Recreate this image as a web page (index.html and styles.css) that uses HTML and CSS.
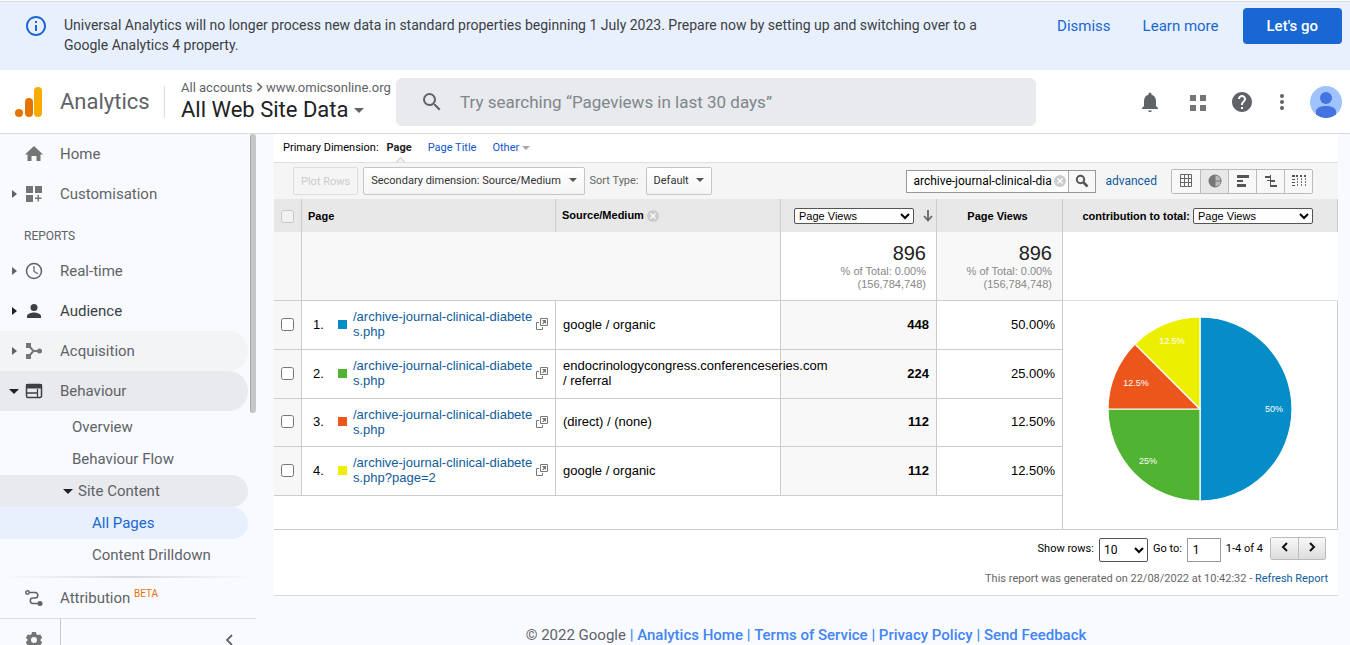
FILE: index.html
```html
<!DOCTYPE html>
<html lang="en-GB">
<head>
    <meta charset="UTF-8">
    <title>Analytics</title>
    <link rel="stylesheet" href="styles.css">
</head>
<body>
<div class="banner">
    <svg class="banner-icon" width="24" height="24" viewBox="0 0 24 24"><path fill="#1967d2" d="M11 7h2v2h-2zm0 4h2v6h-2zm1-9C6.480 2 2 6.480 2 12s4.480 10 10 10 10-4.480 10-10S17.520 2 12 2zm0 18c-4.410 0-8-3.590-8-8s3.590-8 8-8 8 3.590 8 8-3.590 8-8 8z"/></svg>
    <p>Universal Analytics will no longer process new data in standard properties beginning 1 July 2023. Prepare now by setting up and switching over to a Google Analytics 4 property.</p>
    <div class="banner-actions">
        <button type="button" class="text-btn">Dismiss</button>
        <a href="#" class="text-btn">Learn more</a>
        <button type="button" class="primary-btn">Let's go</button>
    </div>
</div>

<header class="header">
    <svg class="logo" width="28" height="32" viewBox="0 0 28 32"><rect x="19" y="1" width="8" height="30" rx="4" fill="#f9ab00"/><rect x="10" y="12" width="8" height="19" rx="4" fill="#e37400"/><circle cx="4" cy="27" r="4" fill="#e37400"/></svg>
    <span class="product">Analytics</span>
    <div class="account">
        <div class="crumb">All accounts <svg width="7" height="10" viewBox="0 0 7 10"><path d="M1.500 1l4 4-4 4" fill="none" stroke="#5f6368" stroke-width="1.500"/></svg> www.omicsonline.org</div>
        <button type="button" class="view-btn">All Web Site Data <svg width="10" height="6" viewBox="0 0 10 6"><path d="M0 0h10L5 5z" fill="#5f6368"/></svg></button>
    </div>
    <label class="search">
        <svg width="24" height="24" viewBox="0 0 24 24"><path fill="#5f6368" d="M15.500 14h-.79l-.28-.27A6.470 6.470 0 0 0 16 9.500 6.500 6.500 0 1 0 9.500 16c1.610 0 3.090-.59 4.230-1.570l.27.28v.79l5 4.990L20.490 19l-4.990-5zm-6 0C7.010 14 5 11.990 5 9.500S7.010 5 9.500 5 14 7.010 14 9.500 11.990 14 9.500 14z"/></svg>
        <input type="text" aria-label="Search" placeholder="Try searching “Pageviews in last 30 days”">
    </label>
    <div class="tools">
        <button type="button" aria-label="Notifications"><svg width="24" height="24" viewBox="0 0 24 24"><path fill="#5f6368" d="M12 22c1.100 0 2-.7 2-1.500h-4c0 .8.900 1.500 2 1.500zm6-6v-5c0-3.070-1.640-5.640-4.500-6.320V4a1.500 1.500 0 0 0-3 0v.68C7.630 5.360 6 7.920 6 11v5l-2 2v1h16v-1z"/></svg></button>
        <button type="button" aria-label="Apps"><svg width="24" height="24" viewBox="0 0 24 24"><path fill="#757575" d="M4 5h6v6H4zm10 0h6v6h-6zM4 15h6v6H4zm10 0h6v6h-6z"/></svg></button>
        <button type="button" aria-label="Help"><svg width="24" height="24" viewBox="0 0 24 24"><path fill="#5f6368" d="M12 2C6.480 2 2 6.480 2 12s4.480 10 10 10 10-4.480 10-10S17.520 2 12 2zm1 17h-2v-2h2zm2.070-7.750l-.9.920C13.450 12.900 13 13.500 13 15h-2v-.5c0-1.100.45-2.100 1.170-2.830l1.240-1.260c.37-.36.590-.86.590-1.410 0-1.100-.9-2-2-2s-2 .9-2 2H8c0-2.210 1.790-4 4-4s4 1.790 4 4c0 .88-.36 1.680-.93 2.250z"/></svg></button>
        <button type="button" aria-label="More"><svg width="24" height="24" viewBox="0 0 24 24"><g fill="#5f6368"><circle cx="12" cy="6" r="2"/><circle cx="12" cy="12" r="2"/><circle cx="12" cy="18" r="2"/></g></svg></button>
        <button type="button" aria-label="Account"><svg width="32" height="32" viewBox="0 0 32 32"><circle cx="16" cy="16" r="16" fill="#a0c3ff"/><circle cx="16" cy="12" r="6" fill="#4374e0"/><path d="M6 28.500v-3C6 21.500 11 20 16 20s10 1.500 10 5.500v3A16 16 0 0 1 6 28.500z" fill="#4374e0"/></svg></button>
    </div>
</header>

<div class="app">
    <nav class="sidebar">
        <div class="nav-scroll">
            <a href="#" class="nav-item"><i></i><svg width="20" height="20" viewBox="0 0 20 20"><path fill="#757575" d="M10 2l9 8.500h-2.500V17h-4v-5h-5v5h-4v-6.500H1z"/></svg>Home</a>
            <a href="#" class="nav-item"><i class="arrow"></i><svg width="20" height="20" viewBox="0 0 20 20"><path fill="#757575" d="M2 2h7v7H2zm9 0h7v7h-7zM2 11h7v7H2zm11.500 0h1.500v2.500h2.500V15H15v2.500h-1.500V15H11v-1.500h2.500z"/></svg>Customisation</a>
            <div class="nav-title">REPORTS</div>
            <a href="#" class="nav-item"><i class="arrow"></i><svg width="20" height="20" viewBox="0 0 20 20"><circle cx="10" cy="10" r="7.500" fill="none" stroke="#5f6368" stroke-width="1.500"/><path d="M10 5v5.500l4 2.300" fill="none" stroke="#5f6368" stroke-width="1.200"/></svg>Real-time</a>
            <a href="#" class="nav-item dark"><i class="arrow"></i><svg width="20" height="20" viewBox="0 0 20 20"><circle cx="10" cy="6.500" r="3.500" fill="#3c4043"/><path fill="#3c4043" d="M3 17v-2c0-2.300 4.500-3.500 7-3.500s7 1.200 7 3.500v2z"/></svg>Audience</a>
            <a href="#" class="nav-item hovered"><i class="arrow"></i><svg width="20" height="20" viewBox="0 0 20 20"><g fill="#757575"><path d="M2 2h5v5H2zM2 13h5v5H2z"/><circle cx="15.500" cy="10" r="2.500"/></g><path d="M5 5l4.500 5L5 15M9.500 10H15" fill="none" stroke="#757575" stroke-width="2"/></svg>Acquisition</a>
            <a href="#" class="nav-item open"><i class="arrow down"></i><svg width="20" height="20" viewBox="0 0 20 20"><rect x="2.500" y="3.500" width="15" height="13" rx="1.500" fill="none" stroke="#3c4043" stroke-width="1.500"/><path d="M2 3h16v4.500H2z" fill="#3c4043"/><path d="M3 12h10M13.500 8v8" stroke="#3c4043" stroke-width="1.300"/></svg>Behaviour</a>
            <a href="#" class="nav-sub">Overview</a>
            <a href="#" class="nav-sub">Behaviour Flow</a>
            <a href="#" class="nav-sub group"><i class="arrow down"></i>Site Content</a>
            <a href="#" class="nav-sub deep current">All Pages</a>
            <a href="#" class="nav-sub deep">Content Drilldown</a>
            <div class="scroll-thumb"></div>
        </div>
        <div class="nav-divider"></div>
        <a href="#" class="nav-item"><i></i><svg width="20" height="20" viewBox="0 0 20 20"><g fill="none" stroke="#5f6368" stroke-width="1.500"><circle cx="3.500" cy="4.500" r="1.700"/><path d="M5.500 4.500H11a2.800 2.800 0 0 1 0 5.600H9a2.700 2.700 0 0 0 0 5.400h5"/></g><circle cx="16" cy="15.500" r="2.500" fill="#5f6368"/></svg><span>Attribution <sup>BETA</sup></span></a>
        <div class="nav-bottom">
            <button type="button" class="admin-btn" aria-label="Admin"><svg width="20" height="20" viewBox="0 0 20 20"><path fill="#757575" fill-rule="evenodd" d="M8 2h4l.5 2.200 1.500.9 2.200-.7 2 3.400L16.600 9.300v1.500l1.600 1.500-2 3.400-2.200-.7-1.500.9L12 18H8l-.5-2.100-1.500-.9-2.200.7-2-3.400 1.600-1.500V9.300L1.800 7.800l2-3.400 2.200.7 1.500-.9zM10 7a3 3 0 1 0 0 6 3 3 0 0 0 0-6z"/></svg></button>
            <button type="button" class="collapse-btn" aria-label="Collapse"><svg width="10" height="14" viewBox="0 0 10 14"><path d="M8 2L3 7l5 5" fill="none" stroke="#5f6368" stroke-width="1.800"/></svg></button>
        </div>
    </nav>

    <main class="main">
        <section class="report">
            <div class="dimensions">
                <span>Primary Dimension:</span>
                <a href="#" class="selected">Page</a>
                <a href="#">Page Title</a>
                <a href="#">Other <i class="caret"></i></a>
            </div>
            <div class="toolbar">
                <button type="button" class="btn" disabled>Plot Rows</button>
                <button type="button" class="btn">Secondary dimension: Source/Medium <i class="caret"></i></button>
                <span class="sort-label">Sort Type:</span>
                <button type="button" class="btn">Default <i class="caret"></i></button>
                <div class="filter">
                    <input type="text" aria-label="Filter" value="archive-journal-clinical-diabetes">
                    <button type="button" class="clear-btn" aria-label="Clear"><svg width="12" height="12" viewBox="0 0 12 12"><circle cx="6" cy="6" r="6" fill="#ccc"/><path d="M3.500 3.500l5 5m0-5l-5 5" stroke="#fff" stroke-width="1.200"/></svg></button>
                    <button type="button" class="go-btn" aria-label="Search"><svg width="14" height="14" viewBox="0 0 14 14"><circle cx="5.500" cy="5.500" r="3.700" fill="none" stroke="#555" stroke-width="2"/><path d="M8.500 8.500l4 4" stroke="#555" stroke-width="2.500"/></svg></button>
                </div>
                <a href="#" class="advanced">advanced</a>
                <div class="views">
                    <button type="button" aria-label="Data"><svg width="14" height="14" viewBox="0 0 14 14"><path d="M1.500.5h11v12h-11zM5.500 1v12M9.500 1v12M1 4.500h12M1 8.500h12" fill="none" stroke="#666"/></svg></button>
                    <button type="button" class="on" aria-label="Percentage"><svg width="14" height="14" viewBox="0 0 14 14"><circle cx="7" cy="7" r="6.500" fill="#777"/><path d="M7.500 1.500A5.500 5.500 0 0 1 12.500 6.500h-5zM7.500 7.500h5a5.500 5.500 0 0 1-5 5z" fill="#bbb"/></svg></button>
                    <button type="button" aria-label="Performance"><svg width="14" height="14" viewBox="0 0 14 14"><path d="M1 1h12v3H1zM1 6h6v2H1zM1 10h9v3H1z" fill="#555"/></svg></button>
                    <button type="button" aria-label="Comparison"><svg width="14" height="14" viewBox="0 0 14 14"><path d="M1 2h6v2H1zM6 1h1v12H6zM7 6h4v2H7zM6 11h7v2H6zM3 6h3v1H3z" fill="#555"/></svg></button>
                    <button type="button" aria-label="Pivot"><svg width="16" height="14" viewBox="0 0 16 14"><path d="M1 1h3v2H1zM5 1h2v2H5zM9 1h2v2H9zM13 1h2v2h-2zM1 5h3v1H1zM1 8h3v1H1zM1 11h3v1H1z" fill="#555"/><path d="M6.500 4v9M10.500 4v9M14.500 4v9" stroke="#777" stroke-dasharray="2 1"/></svg></button>
                </div>
            </div>

            <table class="data">
                <colgroup><col class="c-check"><col class="c-page"><col><col class="c-metric"><col class="c-share"><col class="c-chart"></colgroup>
                <thead>
                    <tr>
                        <th class="check"><input type="checkbox" aria-label="Select all" disabled></th>
                        <th>Page</th>
                        <th>Source/Medium <svg class="remove" width="12" height="12" viewBox="0 0 12 12"><circle cx="6" cy="6" r="6" fill="#ccc"/><path d="M3.500 3.500l5 5m0-5l-5 5" stroke="#fff" stroke-width="1.200"/></svg></th>
                        <th class="metric-th">
                            <div class="metric-head">
                                <select class="metric-select" aria-label="Metric"><option>Page Views</option></select>
                                <svg width="10" height="12" viewBox="0 0 10 12"><path d="M5 0v10M1 6l4 4.500L9 6" fill="none" stroke="#666" stroke-width="1.800"/></svg>
                            </div>
                        </th>
                        <th class="center">Page Views</th>
                        <th class="chart-head"><label for="contribution">contribution to total:</label> <select id="contribution" class="metric-select"><option>Page Views</option></select></th>
                    </tr>
                </thead>
                <tbody>
                    <tr class="totals">
                        <td class="check"></td>
                        <td colspan="2" class="shade"></td>
                        <td class="num"><b>896</b>% of Total: 0.00%<br>(156,784,748)</td>
                        <td class="num shade"><b>896</b>% of Total: 0.00%<br>(156,784,748)</td>
                        <td></td>
                    </tr>
                    <tr>
                        <td class="check"><input type="checkbox" aria-label="Row 1"></td>
                        <td><div class="page-cell"><span class="idx">1.</span><i class="swatch blue"></i><a href="#">/archive-journal-clinical-diabetes.php</a><svg width="12" height="12" viewBox="0 0 12 12"><path d="M4.500.5h7v7h-7zM3 4.500H.5v7h6V9" fill="none" stroke="#777"/><path d="M6 2h4v4L8.700 4.700 7 6.300l-.8-.8L7.600 4z" fill="#777"/></svg></div></td>
                        <td>google / organic</td>
                        <td class="value shade">448</td>
                        <td class="share">50.00%</td>
                        <td class="chart" rowspan="5">
                            <svg class="pie" width="186" height="186" viewBox="-93 -93 186 186">
                                <g stroke="#fff" stroke-width="1.200">
                                    <path d="M0 0V-92A92 92 0 0 1 0 92z" fill="#058dc7"/>
                                    <path d="M0 0V92A92 92 0 0 1-92 0z" fill="#50b432"/>
                                    <path d="M0 0H-92A92 92 0 0 1-65-65z" fill="#ed561b"/>
                                    <path d="M0 0L-65-65A92 92 0 0 1 0-92z" fill="#edef00"/>
                                </g>
                                <text x="74" y="3">50%</text>
                                <text x="-52" y="55">25%</text>
                                <text x="-64" y="-23">12.5%</text>
                                <text x="-28" y="-65">12.5%</text>
                            </svg>
                        </td>
                    </tr>
                    <tr>
                        <td class="check"><input type="checkbox" aria-label="Row 2"></td>
                        <td><div class="page-cell"><span class="idx">2.</span><i class="swatch green"></i><a href="#">/archive-journal-clinical-diabetes.php</a><svg width="12" height="12" viewBox="0 0 12 12"><path d="M4.500.5h7v7h-7zM3 4.500H.5v7h6V9" fill="none" stroke="#777"/><path d="M6 2h4v4L8.700 4.700 7 6.300l-.8-.8L7.600 4z" fill="#777"/></svg></div></td>
                        <td>endocrinologycongress.conferenceseries.com / referral</td>
                        <td class="value shade">224</td>
                        <td class="share">25.00%</td>
                    </tr>
                    <tr>
                        <td class="check"><input type="checkbox" aria-label="Row 3"></td>
                        <td><div class="page-cell"><span class="idx">3.</span><i class="swatch orange"></i><a href="#">/archive-journal-clinical-diabetes.php</a><svg width="12" height="12" viewBox="0 0 12 12"><path d="M4.500.5h7v7h-7zM3 4.500H.5v7h6V9" fill="none" stroke="#777"/><path d="M6 2h4v4L8.700 4.700 7 6.300l-.8-.8L7.600 4z" fill="#777"/></svg></div></td>
                        <td>(direct) / (none)</td>
                        <td class="value shade">112</td>
                        <td class="share">12.50%</td>
                    </tr>
                    <tr>
                        <td class="check"><input type="checkbox" aria-label="Row 4"></td>
                        <td><div class="page-cell"><span class="idx">4.</span><i class="swatch yellow"></i><a href="#">/archive-journal-clinical-diabetes.php?page=2</a><svg width="12" height="12" viewBox="0 0 12 12"><path d="M4.500.5h7v7h-7zM3 4.500H.5v7h6V9" fill="none" stroke="#777"/><path d="M6 2h4v4L8.700 4.700 7 6.300l-.8-.8L7.600 4z" fill="#777"/></svg></div></td>
                        <td>google / organic</td>
                        <td class="value shade">112</td>
                        <td class="share">12.50%</td>
                    </tr>
                    <tr class="filler"><td colspan="5"></td></tr>
                </tbody>
            </table>

            <div class="pager">
                <label for="rows">Show rows:</label>
                <select id="rows"><option>10</option></select>
                <label for="goto">Go to:</label>
                <input type="text" id="goto" value="1">
                <span>1-4 of 4</span>
                <div class="pager-btns">
                    <button type="button" aria-label="Previous"><svg width="8" height="10" viewBox="0 0 8 10"><path d="M6 1L2 5l4 4" fill="none" stroke="#111" stroke-width="2"/></svg></button>
                    <button type="button" aria-label="Next"><svg width="8" height="10" viewBox="0 0 8 10"><path d="M2 1l4 4-4 4" fill="none" stroke="#111" stroke-width="2"/></svg></button>
                </div>
            </div>
            <div class="generated">This report was generated on 22/08/2022 at 10:42:32 - <a href="#">Refresh Report</a></div>
        </section>

        <footer class="footer">
            © 2022 Google <span>|</span> <a href="#">Analytics Home</a> <span>|</span> <a href="#">Terms of Service</a> <span>|</span> <a href="#">Privacy Policy</a> <span>|</span> <a href="#">Send Feedback</a>
        </footer>
    </main>
</div>
</body>
</html>
```
FILE: styles.css
```css
* {
    box-sizing: border-box;
}
body {
    margin: 0;
    height: 100vh;
    overflow: hidden;
    display: flex;
    flex-direction: column;
    font-family: Roboto, Arial, sans-serif;
    font-size: 12px;
    background: #f8fafd;
    color: #000;
}
a {
    color: #15c;
    text-decoration: none;
}
button {
    font: inherit;
    cursor: pointer;
}
svg {
    flex: none;
}

/* notice */
.banner {
    display: flex;
    flex: none;
    align-items: flex-start;
    margin-top: 1px;
    height: 69px;
    padding: 6px 8px 0 24px;
    border-top: 1px solid #dadce0;
    background: #e8f0fe;
}
.banner-icon {
    margin-top: 6px;
}
.banner p {
    flex: 1;
    max-width: 958px;
    margin: 7px 0 0 16px;
    font-size: 14px;
    line-height: 20px;
    color: #3c4043;
}
.banner-actions {
    display: flex;
    align-items: center;
    gap: 32px;
    margin-left: auto;
    font-size: 15px;
}
.text-btn {
    border: 0;
    padding: 0;
    background: none;
    color: #1967d2;
}
.primary-btn {
    height: 36px;
    padding: 0 24px;
    margin-left: -8px;
    border: 0;
    border-radius: 4px;
    background: #1967d2;
    color: #fff;
    font-weight: 500;
}

/* header */
.header {
    display: flex;
    flex: none;
    align-items: center;
    height: 64px;
    padding: 0 8px 0 15px;
    border-bottom: 1px solid #dadce0;
    background: #fff;
}
.product {
    width: 104px;
    margin-left: 17px;
    font-size: 22px;
    color: #5f6368;
}
.account {
    width: 232px;
    padding-left: 16px;
    border-left: 1px solid #dadce0;
    height: 32px;
    display: flex;
    flex-direction: column;
    justify-content: center;
    white-space: nowrap;
}
.crumb {
    font-size: 13px;
    line-height: 16px;
    color: #5f6368;
}
.view-btn {
    border: 0;
    padding: 0;
    background: none;
    font-size: 22px;
    line-height: 28px;
    text-align: left;
    color: #202124;
}
.view-btn svg {
    vertical-align: middle;
}
.search {
    display: flex;
    align-items: center;
    flex: 0 1 640px;
    height: 48px;
    padding: 0 24px;
    gap: 16px;
    border-radius: 6px;
    background: #e8eaed;
}
.search input {
    flex: 1;
    border: 0;
    padding: 0;
    background: none;
    outline: 0;
    font: 17px Roboto, Arial, sans-serif;
}
.search input::placeholder {
    color: #80868b;
}
.tools {
    display: flex;
    align-items: center;
    gap: 20px;
    margin-left: auto;
}
.tools button {
    display: flex;
    border: 0;
    padding: 0;
    background: none;
}
.tools button:first-child {
    margin-right: 4px;
}
.tools button:nth-child(4) {
    margin: 0 -4px;
}

/* navigation */
.app {
    display: flex;
    flex: 1;
    min-height: 0;
}
.sidebar {
    flex: none;
    width: 256px;
    overflow: hidden;
}
.nav-scroll {
    position: relative;
    padding-right: 8px;
    padding-bottom: 5px;
}
.scroll-thumb {
    position: absolute;
    top: 0;
    right: 0;
    width: 6px;
    height: 279px;
    border-left: 1px solid #aaa;
    border-radius: 3px;
    background: #c6c7c8;
}
.nav-item, .nav-sub {
    display: flex;
    align-items: center;
    height: 40px;
    font-size: 15px;
    color: #5f6368;
}
.nav-item {
    padding-left: 9px;
    border-radius: 0 20px 20px 0;
}
.nav-item > i {
    width: 10px;
    margin-right: 5px;
}
.nav-item > svg {
    margin-right: 16px;
}
.arrow::before {
    content: "";
    display: block;
    width: 0;
    margin-left: 3px;
    border: 4px solid transparent;
    border-left: 5px solid #5f6368;
    border-right: 0;
}
.arrow.down::before {
    margin-left: 0;
    border: 5px solid transparent;
    border-top-color: #202124;
    border-bottom: 0;
}
.dark {
    color: #3c4043;
}
.dark .arrow::before {
    border-left-color: #202124;
}
.hovered {
    background: #f3f4f6;
}
.open, .group {
    background: #e8eaed;
}
.nav-title {
    height: 37px;
    padding: 15px 0 0 24px;
    font-size: 12px;
    line-height: 14px;
    color: #5f6368;
}
.nav-sub {
    height: 32px;
    padding-left: 72px;
    border-radius: 0 16px 16px 0;
}
.nav-sub.group {
    padding-left: 63px;
    gap: 5px;
}
.nav-sub.deep {
    padding-left: 92px;
}
.nav-sub.current {
    background: #e8f0fe;
    color: #1967d2;
}
.nav-divider {
    height: 2px;
    background: linear-gradient(90deg, transparent, #dadce0, transparent);
}
.nav-item sup {
    font-size: 10px;
    line-height: 10px;
    color: #e8710a;
}
.nav-bottom {
    display: flex;
    justify-content: space-between;
    height: 42px;
    border-top: 1px solid #dadce0;
}
.nav-bottom button {
    display: flex;
    align-items: center;
    border: 0;
    background: none;
}
.nav-bottom .admin-btn {
    width: 61px;
    padding: 0 0 0 24px;
    border-right: 1px solid #c6c7c8;
}
.collapse-btn {
    padding: 0 22px;
}

/* report */
.main {
    flex: 1;
    min-width: 0;
    padding: 0 12px 0 18px;
}
.report {
    border-bottom: 1px solid #dcdcdc;
    background: #fff;
}
.dimensions {
    display: flex;
    height: 28px;
    padding: 0 9px 2px;
    align-items: center;
    font-size: 11px;
}
.dimensions a {
    margin-left: 16px;
}
.dimensions .selected {
    position: relative;
    margin-left: 8px;
    font-weight: 700;
    color: #222;
}
.dimensions .selected::after {
    content: "";
    position: absolute;
    left: 9px;
    top: 18px;
    width: 8px;
    height: 8px;
    border: solid #ccc;
    border-width: 1px 0 0 1px;
    background: #f5f5f5;
    transform: rotate(45deg);
}
.caret {
    display: inline-block;
    vertical-align: 2px;
    border: 4px solid transparent;
    border-top-color: #555;
    border-bottom: 0;
}
.dimensions .caret {
    border-top-color: #aaa;
    vertical-align: 1px;
}
.toolbar {
    position: relative;
    display: flex;
    align-items: center;
    height: 37px;
    padding: 0 25px 0 19px;
    border-top: 1px solid #e0e0e0;
    background: #f5f5f5;
    font-size: 11px;
}
.btn {
    height: 28px;
    padding: 0 7px 2px;
    margin-right: 5px;
    border: 1px solid #c6c6c6;
    border-radius: 2px;
    background: linear-gradient(#fff, #f5f5f5);
    color: #333;
    white-space: nowrap;
}
.btn:disabled {
    padding-bottom: 0;
    background: #f5f5f5;
    border-color: #ddd;
    color: #ccc;
}
.btn .caret {
    margin-left: 5px;
}
.sort-label {
    margin-right: 7px;
    padding-bottom: 2px;
    color: #666;
}
.filter {
    display: flex;
    margin-left: auto;
    width: 190px;
    height: 23px;
    border: 1px solid #999;
    background: #fff;
}
.filter input {
    flex: 1;
    min-width: 0;
    border: 0;
    padding: 0 0 0 6px;
    font: 12px Roboto, Arial, sans-serif;
}
.filter button {
    display: flex;
    align-items: center;
    justify-content: center;
    border: 0;
    padding: 0 2px;
    background: none;
}
.filter .go-btn {
    width: 27px;
    border-left: 1px solid #aaa;
    background: #f8f8f8;
}
.advanced {
    margin: 0 14px 0 9px;
    font-size: 12px;
    color: #0f5c9c;
}
.views {
    display: flex;
    border: 1px solid #bbb;
    border-radius: 2px;
}
.views button {
    display: flex;
    align-items: center;
    justify-content: center;
    width: 28px;
    height: 23px;
    padding: 0;
    border: 0;
    background: #f8f8f8;
}
.views button + button {
    border-left: 1px solid #bbb;
}
.views .on {
    background: #e8e8e8;
}

.data {
    width: 100%;
    table-layout: fixed;
    border-collapse: separate;
    border-spacing: 0;
    font-family: "Liberation Sans", Arial, sans-serif;
    font-size: 13px;
    line-height: 15px;
}
.c-check { width: 28px; }
.c-page { width: 254px; }
.c-metric { width: 156px; }
.c-share { width: 126px; }
.c-chart { width: 275px; }
.data th, .data td {
    padding: 0 7px 2px;
    border-right: 1px solid #ccc;
    border-bottom: 1px solid #ccc;
    text-align: left;
}
.data th {
    height: 33px;
    padding: 0 6px;
    border-bottom: 0;
    background: #e8e8e8;
    font: 700 11px "Liberation Sans", Arial, sans-serif;
}
.data td {
    height: 49px;
}
.data tr:nth-child(4) td {
    height: 48px;
}
.data .check {
    padding: 0 7px 2px;
    background: #f7f7f7;
    line-height: 0;
}
.data th.check {
    padding: 2px 7px 0;
    background: #e8e8e8;
}
.check input {
    width: 13px;
    height: 13px;
    margin: 0;
}
.remove {
    vertical-align: -3px;
}
.data .shade {
    background: #f8f8f8;
}
.data .metric-th {
    padding: 0 3px;
}
.metric-head {
    display: flex;
    align-items: center;
    justify-content: flex-end;
    gap: 9px;
}
.metric-select {
    width: 120px;
    height: 16px;
    border: 1px solid #555;
    border-radius: 2px;
    background: #fff;
    font: 11px "Liberation Sans", Arial, sans-serif;
}
.data .center {
    padding-right: 10px;
    text-align: center;
}
.data .chart-head {
    padding-right: 24px;
    text-align: right;
    white-space: nowrap;
}
.data .totals td {
    height: 69px;
}
.totals td:last-child {
    border-right: 0;
    border-bottom-color: #e0e0e0;
}
.data .num {
    padding: 0 10px 0 0;
    text-align: right;
    font-size: 11px;
    line-height: 13px;
    color: #888;
}
.num b {
    display: block;
    font: 20px/24px "Liberation Sans", Arial, sans-serif;
    color: #222;
}
.page-cell {
    display: flex;
    align-items: center;
    padding-left: 4px;
}
.idx {
    width: 25px;
}
.swatch {
    flex: none;
    width: 9px;
    height: 9px;
    margin-right: 6px;
}
.blue { background: #058dc7; }
.green { background: #50b432; }
.orange { background: #ed561b; }
.yellow { background: #edef00; }
.page-cell a {
    flex: 1;
    min-width: 0;
    margin-right: 3px;
    color: #0f5c9c;
    word-break: break-all;
}
.data .value {
    text-align: right;
    font-weight: 700;
}
.data .share {
    text-align: right;
}
.data .chart {
    padding: 0;
    vertical-align: middle;
}
.pie {
    display: block;
    margin: -13px auto 0;
}
.pie text {
    fill: #fff;
    font: 9px "Liberation Sans", Arial, sans-serif;
    text-anchor: middle;
}
.data .filler td {
    height: 34px;
}

.pager {
    display: flex;
    align-items: center;
    justify-content: flex-end;
    height: 40px;
    padding-right: 12px;
    gap: 5px;
    font-size: 11px;
}
.pager label, .pager span, .pager-btns {
    margin-bottom: 3px;
}
.pager select, .pager input {
    height: 24px;
    font: 12px Roboto, Arial, sans-serif;
}
.pager select {
    width: 49px;
    border: 1px solid #555;
    border-radius: 2px;
    background: #fff;
}
.pager input {
    width: 34px;
    padding: 0 5px;
    border: 1px solid #999;
}
.pager-btns {
    display: flex;
    margin-left: 2px;
    border: 1px solid #bbb;
    border-radius: 2px;
}
.pager-btns button {
    width: 27px;
    height: 21px;
    padding: 0;
    border: 0;
    background: linear-gradient(#f8f8f8, #ddd);
}
.pager-btns button + button {
    border-left: 1px solid #bbb;
}
.generated {
    height: 25px;
    padding-right: 10px;
    line-height: 17px;
    font-size: 11px;
    text-align: right;
    color: #666;
}
.generated a {
    color: #0f5c9c;
}
.footer {
    padding-top: 29px;
    text-align: center;
    font-size: 15px;
    line-height: 20px;
    color: #5f6368;
}
.footer a, .footer span {
    color: #4285f4;
    font-weight: 500;
}
```
